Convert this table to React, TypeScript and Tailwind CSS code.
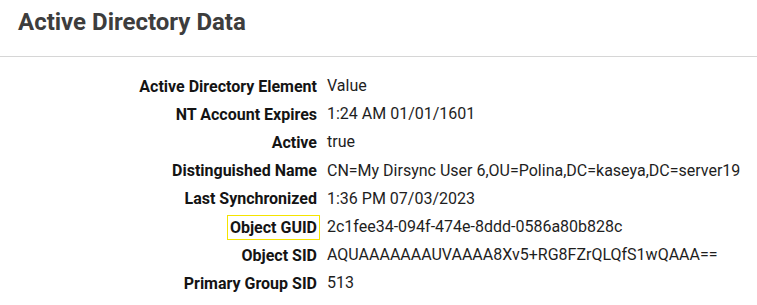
import React from "react";

const rows: [string, string, boolean?][] = [
  ["Active Directory Element", "Value"],
  ["NT Account Expires", "1:24 AM 01/01/1601"],
  ["Active", "true"],
  ["Distinguished Name", "CN=My Dirsync User 6,OU=Polina,DC=kaseya,DC=server19"],
  ["Last Synchronized", "1:36 PM 07/03/2023"],
  ["Object GUID", "2c1fee34-094f-474e-8ddd-0586a80b828c", true],
  ["Object SID", "AQUAAAAAAAUVAAAA8Xv5+RG8FZrQLQfS1wQAAA=="],
  ["Primary Group SID", "513"],
];

function Label({ text, hl }: { text: string; hl?: boolean }) {
  if (hl) {
    return (
      <span className="inline-block px-[2px] leading-[23px] font-bold text-[#141414] border border-solid border-[#f5e400]">
        {text}
      </span>
    );
  }
  return (
    <span className="inline-block px-[3px] py-px leading-[23px] font-bold text-[#141414]">{text}</span>
  );
}

export default function App() {
  return (
    <div className="w-[757px] h-[305px] bg-white overflow-hidden" style={{ fontFamily: "Roboto, 'Liberation Sans', sans-serif" }}>
      <div className="h-[57px] border-b border-[#d6d6d6] pl-[18px] pt-[5px]">
        <h1 className="text-[24px] leading-[34px] font-bold text-[#3d3d3d]">Active Directory Data</h1>
      </div>
      <div className="pt-[15px] grid grid-cols-[321px_1fr] auto-rows-[28.2px] items-center text-[16px]">
        {rows.map(([label, value, hl]) => (
          <React.Fragment key={label}>
            <div className="text-right pr-px">
              <Label text={label} hl={hl} />
            </div>
            <div className="pl-[6px] text-[#1e1e1e]">{value}</div>
          </React.Fragment>
        ))}
      </div>
    </div>
  );
}
